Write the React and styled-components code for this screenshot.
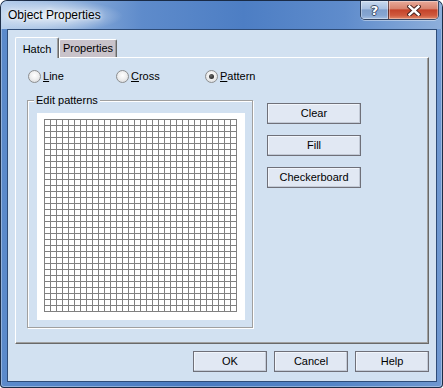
import React from 'react';
import styled, { createGlobalStyle } from 'styled-components';

const Global = createGlobalStyle`
  html, body { margin: 0; padding: 0; background: #ffffff; }
  body { font-family: "Liberation Sans", Arial, sans-serif; font-size: 11px; color: #000; }
  * { box-sizing: border-box; }
`;

const Window = styled.div`
  width: 443px;
  height: 388px;
  display: flex;
  flex-direction: column;
  border: 1px solid rgba(16, 28, 48, 0.85);
  border-radius: 7px 7px 4px 4px;
  overflow: hidden;
  background: linear-gradient(90deg, #5b8acb 0%, #4a7bc1 45%, #5485c7 75%, #6e97d0 100%);
  box-shadow: inset 0 0 0 1px rgba(255, 255, 255, 0.35);
`;

const TitleBar = styled.div`
  height: 28px;
  flex: none;
  display: flex;
  align-items: center;
  padding: 0 3px 0 7px;
  background:
    radial-gradient(ellipse 70px 16px at 52px 15px, rgba(255,255,255,0.75), rgba(255,255,255,0) 100%),
    linear-gradient(90deg, #b9d0ec 0%, #93b3dd 14%, #5e8bcb 32%, #4d7ec4 55%, #5f8ccc 78%, #8eafdb 100%);
`;

const Title = styled.div`
  font-size: 12px;
  color: #000;
  text-shadow: 0 0 6px rgba(255,255,255,0.9), 0 0 3px rgba(255,255,255,0.8);
`;

const CaptionGroup = styled.div`
  margin-left: auto;
  align-self: flex-start;
  display: flex;
  height: 19px;
  border: 1px solid rgba(30, 40, 60, 0.75);
  border-top: none;
  border-radius: 0 0 5px 5px;
  overflow: hidden;
  box-shadow: 0 1px 0 rgba(255,255,255,0.4);
`;

const CaptionButton = styled.div`
  width: ${p => p.$w}px;
  height: 100%;
  display: flex;
  align-items: center;
  justify-content: center;
  background: ${p => p.$close
    ? 'linear-gradient(180deg, #e8aa9a 0%, #d8846f 42%, #c4432a 50%, #cf5a3e 80%, #e08a6c 100%)'
    : 'linear-gradient(180deg, #c9daee 0%, #a9c1e1 42%, #7f9fcc 50%, #86a6d2 80%, #a7c0e2 100%)'};
  border-left: ${p => p.$close ? '1px solid rgba(40,30,40,0.6)' : 'none'};
  box-shadow: inset 0 0 0 1px rgba(255,255,255,0.35);
`;

const HelpGlyph = styled.span`
  font-family: "DejaVu Sans", sans-serif;
  font-weight: bold;
  font-size: 13px;
  line-height: 1;
  color: #fff;
  text-shadow: -1px 0 0 #3a4a66, 1px 0 0 #3a4a66, 0 -1px 0 #3a4a66, 0 1px 0 #3a4a66;
`;

const Client = styled.div`
  flex: 1;
  margin: 0 5px 5px 6px;
  border: 1px solid #2e4c78;
  background: #d2e1f1;
  display: flex;
  flex-direction: column;
  padding: 7px 7px 9px 7px;
`;

const TabStrip = styled.div`
  display: flex;
  align-items: flex-end;
  height: 21px;
  margin-bottom: -1px;
  position: relative;
  z-index: 1;
`;

const Tab = styled.div`
  width: ${p => p.$w}px;
  height: ${p => (p.$active ? 21 : 18)}px;
  margin-bottom: ${p => (p.$active ? 0 : 1)}px;
  background: ${p => (p.$active ? '#d2e1f1' : '#c9c3ca')};
  border-top: 1px solid #ffffff;
  border-left: 1px solid #ffffff;
  border-right: 1px solid #696969;
  box-shadow: inset -1px 0 0 #a0a0a0;
  border-radius: 2px 2px 0 0;
  display: flex;
  justify-content: center;
  padding-top: ${p => (p.$active ? 5 : 2)}px;
  line-height: 13px;
`;

const Panel = styled.div`
  flex: 1;
  border-top: 1px solid #ffffff;
  border-left: 1px solid #ffffff;
  border-right: 1px solid #696969;
  border-bottom: 1px solid #696969;
  box-shadow: inset -1px -1px 0 #a0a0a0;
  padding: 12px 11px 0 11px;
`;

const RadioRow = styled.div`
  display: flex;
  margin-left: 1px;
  height: 13px;
`;

const RadioItem = styled.label`
  width: ${p => p.$w}px;
  display: flex;
  align-items: center;
  gap: 2px;
  line-height: 13px;
`;

const RadioCircle = styled.span`
  width: 13px;
  height: 13px;
  flex: none;
  border-radius: 50%;
  border: 1px solid #8c8e90;
  background: radial-gradient(circle at 50% 40%, #ffffff 0%, #f0f0f0 45%, #d2d4d8 100%);
  display: flex;
  align-items: center;
  justify-content: center;
  &::after {
    content: '';
    width: 5px;
    height: 5px;
    border-radius: 50%;
    background: ${p => (p.$checked ? 'radial-gradient(circle at 40% 35%, #6a6a6a, #141414)' : 'transparent')};
  }
`;

const ContentRow = styled.div`
  display: flex;
  align-items: flex-start;
  gap: 14px;
  margin-top: 17px;
`;

const GroupBox = styled.div`
  position: relative;
  width: 226px;
  height: 228px;
  border: 1px solid #a0a0a0;
  box-shadow: 1px 1px 0 #ffffff, inset 1px 1px 0 #ffffff;
  padding: 12px 0 0 9px;
`;

const Legend = styled.span`
  position: absolute;
  top: -7px;
  left: 6px;
  padding: 0 2px;
  line-height: 13px;
  background: #d2e1f1;
`;

const Canvas = styled.div`
  width: 208px;
  height: 207px;
  background: #ffffff;
  padding: 6px 0 0 7px;
`;

const Grid = styled.div`
  width: 193px;
  height: 193px;
  background-image:
    linear-gradient(to right, #808080 1px, transparent 1px),
    linear-gradient(to bottom, #808080 1px, transparent 1px);
  background-size: 6px 6px;
`;

const ButtonColumn = styled.div`
  display: flex;
  flex-direction: column;
  gap: 11px;
  margin-top: 3px;
`;

const Button = styled.div`
  width: ${p => p.$w}px;
  height: 21px;
  display: flex;
  align-items: center;
  justify-content: center;
  background: #e1e8f3;
  border: 1px solid #6f7079;
  box-shadow: inset -1px -1px 0 #c3cad6, inset 1px 1px 0 #f1f5fb;
  line-height: 13px;
`;

const BottomRow = styled.div`
  display: flex;
  justify-content: flex-end;
  gap: 7px;
  margin-top: 7px;
`;

function Radio({ w, checked, accel, rest }) {
  return (
    <RadioItem $w={w}>
      <RadioCircle $checked={checked} />
      <span><u>{accel}</u>{rest}</span>
    </RadioItem>
  );
}

export default function App() {
  return (
    <>
      <Global />
      <Window>
        <TitleBar>
          <Title>Object Properties</Title>
          <CaptionGroup>
            <CaptionButton $w={27}>
              <HelpGlyph>?</HelpGlyph>
            </CaptionButton>
            <CaptionButton $w={50} $close>
              <svg width="14" height="11" viewBox="0 0 14 11">
                <path d="M2.5 1.5 L11.5 9.5 M11.5 1.5 L2.5 9.5" stroke="#4a2420" strokeWidth="4.4" strokeLinecap="square" fill="none" />
                <path d="M2.5 1.5 L11.5 9.5 M11.5 1.5 L2.5 9.5" stroke="#ffffff" strokeWidth="2.4" strokeLinecap="square" fill="none" />
              </svg>
            </CaptionButton>
          </CaptionGroup>
        </TitleBar>
        <Client>
          <TabStrip>
            <Tab $w={44} $active>Hatch</Tab>
            <Tab $w={58}>Properties</Tab>
          </TabStrip>
          <Panel>
            <RadioRow>
              <Radio w={88} accel="L" rest="ine" />
              <Radio w={89} accel="C" rest="ross" />
              <Radio w={80} accel="P" rest="attern" checked />
            </RadioRow>
            <ContentRow>
              <GroupBox>
                <Legend>Edit patterns</Legend>
                <Canvas>
                  <Grid />
                </Canvas>
              </GroupBox>
              <ButtonColumn>
                <Button $w={94}>Clear</Button>
                <Button $w={94}>Fill</Button>
                <Button $w={94}>Checkerboard</Button>
              </ButtonColumn>
            </ContentRow>
          </Panel>
          <BottomRow>
            <Button $w={74}>OK</Button>
            <Button $w={74}>Cancel</Button>
            <Button $w={74}>Help</Button>
          </BottomRow>
        </Client>
      </Window>
    </>
  );
}
